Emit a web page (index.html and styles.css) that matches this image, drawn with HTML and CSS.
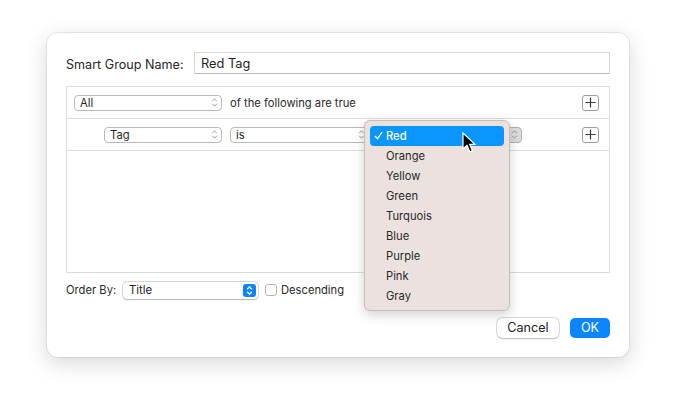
FILE: index.html
```html
<!DOCTYPE html>
<html>
<head>
<meta charset="utf-8">
<link rel="stylesheet" href="styles.css">
</head>
<body>
<div class="dialog">
  <div class="name-row">
    <span class="label">Smart Group Name:</span>
    <div class="field">Red Tag</div>
  </div>
  <div class="rules">
    <div class="rule-row">
      <div class="popup w-all"><span>All</span><svg class="stepper" viewBox="0 0 7 11"><path d="M1.2 4.2 L3.5 1.8 L5.8 4.2 M1.2 6.8 L3.5 9.2 L5.8 6.8"/></svg></div>
      <span class="rule-text">of the following are true</span>
      <div class="spacer"></div>
      <div class="plus"><svg viewBox="0 0 11 11"><path d="M5.5 0.5 V10.5 M0.5 5.5 H10.5"/></svg></div>
    </div>
    <div class="rule-row sub">
      <div class="popup w-tag"><span>Tag</span><svg class="stepper" viewBox="0 0 7 11"><path d="M1.2 4.2 L3.5 1.8 L5.8 4.2 M1.2 6.8 L3.5 9.2 L5.8 6.8"/></svg></div>
      <div class="popup w-is"><span>is</span><svg class="stepper" viewBox="0 0 7 11"><path d="M1.2 4.2 L3.5 1.8 L5.8 4.2 M1.2 6.8 L3.5 9.2 L5.8 6.8"/></svg></div>
      <div class="popup w-val pressed"><span></span><svg class="stepper" viewBox="0 0 7 11"><path d="M1.2 4.2 L3.5 1.8 L5.8 4.2 M1.2 6.8 L3.5 9.2 L5.8 6.8"/></svg></div>
      <div class="spacer"></div>
      <div class="plus"><svg viewBox="0 0 11 11"><path d="M5.5 0.5 V10.5 M0.5 5.5 H10.5"/></svg></div>
    </div>
  </div>
  <div class="order-row">
    <span class="label">Order By:</span>
    <div class="popup blue-popup"><span>Title</span><span class="blue-step"><svg viewBox="0 0 7 11"><path d="M1.2 4.2 L3.5 1.8 L5.8 4.2 M1.2 6.8 L3.5 9.2 L5.8 6.8"/></svg></span></div>
    <span class="check"></span>
    <span class="label">Descending</span>
  </div>
  <div class="buttons">
    <div class="btn">Cancel</div>
    <div class="btn primary">OK</div>
  </div>

  <div class="menu">
    <div class="item selected"><svg class="tick" viewBox="0 0 10 10"><path d="M1 5.5 L3.8 8.5 L9 1.2"/></svg>Red</div>
    <div class="item">Orange</div>
    <div class="item">Yellow</div>
    <div class="item">Green</div>
    <div class="item">Turquois</div>
    <div class="item">Blue</div>
    <div class="item">Purple</div>
    <div class="item">Pink</div>
    <div class="item">Gray</div>
  </div>
  <svg class="cursor" viewBox="0 0 14 22"><path d="M1 1 L1 17 L5 13.2 L7.8 19.8 L10.4 18.7 L7.7 12.3 L13 12.3 Z"/></svg>
</div>
</body>
</html>
```
FILE: styles.css
```css
html, body {
  margin: 0;
  padding: 0;
  background: #ffffff;
}
body {
  font-family: "Inter", "Liberation Sans", sans-serif;
  color: #222;
  width: 677px;
  height: 404px;
  overflow: hidden;
}
.dialog {
  position: relative;
  box-sizing: border-box;
  margin: 33px 0 0 47px;
  width: 582px;
  height: 324px;
  background: #fff;
  border-radius: 11px;
  box-shadow: 0 0 0 1px rgba(0,0,0,0.07), 0 6px 22px rgba(0,0,0,0.16);
  padding: 19px 19px 0 19px;
  display: flex;
  flex-direction: column;
}
.label {
  font-size: 12.6px;
  color: #262626;
}
.name-row {
  display: flex;
  align-items: center;
  height: 22px;
}
.name-row .label {
  width: 128px;
  flex: none;
  padding-top: 2px;
}
.field {
  flex: 1;
  height: 22px;
  box-sizing: border-box;
  border: 1px solid #d6d6d6;
  border-bottom-color: #bdbdbd;
  font-size: 12.8px;
  padding: 1px 0 0 6px;
  line-height: 20px;
  color: #1f1f1f;
}
.rules {
  margin-top: 12px;
  height: 187px;
  box-sizing: border-box;
  border: 1px solid #dcdcdc;
  display: flex;
  flex-direction: column;
}
.rule-row {
  height: 31px;
  flex: none;
  display: flex;
  align-items: center;
  padding: 0 10px 0 7px;
  border-bottom: 1px solid #dcdcdc;
  gap: 8px;
}
.rule-row.sub {
  padding-left: 37px;
}
.spacer { flex: 1; }
.popup {
  box-sizing: border-box;
  height: 16px;
  border: 1px solid #b9b9b9;
  border-radius: 4px;
  background: #fff;
  display: flex;
  align-items: center;
  justify-content: space-between;
  padding: 0 3px 0 5px;
  font-size: 11.2px;
  color: #262626;
  flex: none;
}
.popup .stepper {
  width: 7px;
  height: 11px;
  fill: none;
  stroke: #9a9a9a;
  stroke-width: 1;
}
.w-all { width: 148px; }
.w-tag { width: 118px; }
.w-is { width: 139px; }
.w-val { width: 145px; }
.popup.pressed {
  background: #dcdcdc;
  border-color: #b0b0b0;
}
.rule-text {
  font-size: 11.2px;
  color: #2a2a2a;
}
.plus {
  width: 17px;
  height: 16px;
  box-sizing: border-box;
  border: 1px solid #9d9d9d;
  border-radius: 3px;
  display: flex;
  align-items: center;
  justify-content: center;
  background: #fff;
}
.plus svg {
  width: 11px;
  height: 11px;
  fill: none;
  stroke: #3a3a3a;
  stroke-width: 1.2;
}
.order-row {
  margin-top: 9px;
  height: 16px;
  display: flex;
  align-items: center;
}
.order-row .label {
  font-size: 11.2px;
  color: #2a2a2a;
}
.order-row > .label:first-child {
  width: 57px;
}
.blue-popup {
  width: 135px;
  height: 17px;
  border: none;
  box-shadow: 0 0 0 0.5px rgba(0,0,0,0.25), 0 0.5px 1.5px rgba(0,0,0,0.2);
  padding: 0 2px 0 6px;
  font-size: 11.4px;
  border-radius: 4px;
}
.blue-step {
  width: 13px;
  height: 13px;
  background: #0a84ff;
  border-radius: 3px;
  display: flex;
  align-items: center;
  justify-content: center;
}
.blue-step svg {
  width: 7px;
  height: 11px;
  fill: none;
  stroke: #fff;
  stroke-width: 1.3;
}
.check {
  width: 12px;
  height: 12px;
  box-sizing: border-box;
  border: 1px solid #b3b3b3;
  border-radius: 3px;
  margin: 0 4px 0 7px;
  background: #fff;
}
.buttons {
  margin-top: 20px;
  display: flex;
  justify-content: flex-end;
  gap: 11px;
  padding-right: 0;
}
.btn {
  height: 20px;
  box-sizing: border-box;
  border-radius: 5px;
  font-size: 12.6px;
  line-height: 20px;
  text-align: center;
  background: #fff;
  box-shadow: 0 0 0 0.5px rgba(0,0,0,0.22), 0 0.5px 2px rgba(0,0,0,0.18);
  width: 62px;
  color: #222;
}
.btn.primary {
  width: 40px;
  background: #0b86ff;
  color: #fff;
  box-shadow: none;
}
.menu {
  position: absolute;
  left: 317px;
  top: 87px;
  width: 146px;
  height: 191px;
  box-sizing: border-box;
  background: #ebe2df;
  border: 1px solid #c6bebb;
  border-radius: 6px;
  box-shadow: 0 4px 12px rgba(0,0,0,0.18);
  padding: 5px 5px;
}
.item {
  height: 20px;
  line-height: 20px;
  font-size: 11.2px;
  color: #2a2a2a;
  padding-left: 16px;
  display: flex;
  align-items: center;
  position: relative;
}
.item.selected {
  background: #0a95ff;
  color: #fff;
  border-radius: 4px;
  font-weight: 500;
}
.tick {
  position: absolute;
  left: 4px;
  top: 5px;
  width: 9px;
  height: 9px;
  fill: none;
  stroke: #fff;
  stroke-width: 1.5;
}
.cursor {
  position: absolute;
  left: 415px;
  top: 99px;
  width: 14px;
  height: 22px;
  fill: #000;
  stroke: #fff;
  stroke-width: 1.2;
}
```
